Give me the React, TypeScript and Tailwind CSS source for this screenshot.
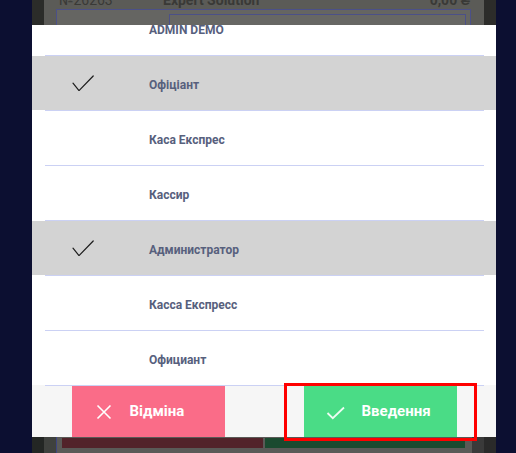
import React from "react";

type Role = { name: string; checked?: boolean };

const roles: Role[] = [
  { name: "ADMIN DEMO" },
  { name: "Офіціант", checked: true },
  { name: "Каса Експрес" },
  { name: "Кассир" },
  { name: "Администратор", checked: true },
  { name: "Касса Експресс" },
  { name: "Официант" },
];

function Check() {
  return (
    <svg width="22" height="16" viewBox="0 0 22 16" fill="none">
      <path d="M1 8.2 L7 15.6 L21.2 1" stroke="#1c1c1c" strokeWidth="1.2" strokeLinecap="round" strokeLinejoin="round" />
    </svg>
  );
}

function Divider() {
  return <div className="ml-[13px] mr-[12px] h-px bg-[#cbd1f4]" />;
}

function RoleRow({ role, last }: { role: Role; last: boolean }) {
  return (
    <div>
      <div className={`flex h-[54px] items-center ${role.checked ? "bg-[#d3d3d3]" : "bg-white"}`}>
        <div className="flex w-[117px] shrink-0 items-center pl-10">{role.checked && <Check />}</div>
        <span className="pt-[3px] text-[12px] font-bold text-[#57607d]">{role.name}</span>
      </div>
      {!last && <Divider />}
    </div>
  );
}

function BackdropTop() {
  return (
    <div className="flex h-[25px] shrink-0 overflow-hidden">
      <div className="w-3 bg-[#2b2c29]" />
      <div className="flex flex-1 flex-col bg-[#5b5b57]">
        <div className="-mt-[7px] flex h-[14px] items-center pl-[15px] pr-[14px] text-[14px] leading-[14px] text-[#393936]">
          <span className="w-[104px]">№26263</span>
          <span className="font-bold">Expert Solution</span>
          <span className="ml-auto font-bold">0,00 ₴</span>
        </div>
        <div className="ml-3 mr-[13px] mt-[2px] flex-1 border border-b-0 border-[#4b5088] bg-[#656562] pl-[112px] pr-1 pt-1">
          <div className="h-full border border-b-0 border-[#4b5088] bg-[#676764]" />
        </div>
      </div>
      <div className="w-3 bg-[#2c2c2a]" />
    </div>
  );
}

function BackdropBottom() {
  return (
    <div className="flex h-[16px] shrink-0">
      <div className="w-3 bg-[#232624]" />
      <div className="w-3 bg-[#3f413e]" />
      <div className="w-px bg-[#3d4480]" />
      <div className="flex flex-1 gap-[2px] bg-[#5a5a57] pl-[5px] pr-[7px] pt-px">
        <div className="h-[10px] w-[201px] bg-[#52232a]" />
        <div className="h-[10px] flex-1 bg-[#1b4a30]" />
      </div>
      <div className="w-3 bg-[#3a3a3a]" />
      <div className="w-3 bg-[#2a2a2a]" />
    </div>
  );
}

export default function App() {
  return (
    <div className="flex h-[453px] w-[516px] overflow-hidden bg-[#0c0f31] font-['Roboto',sans-serif]">
      <div className="w-8 shrink-0" />
      <div className="relative flex w-[464px] shrink-0 flex-col">
        <BackdropTop />

        <div className="flex flex-1 flex-col bg-white">
          <div className="h-[360px] overflow-hidden">
            <div className="-mt-[24px]">
              {roles.map((r, i) => (
                <RoleRow key={r.name} role={r} last={i === roles.length - 1} />
              ))}
            </div>
          </div>
          <div className="flex flex-1 flex-col bg-[#f6f6f6]">
            <Divider />
            <div className="grid flex-1 grid-cols-2">
              <div className="flex justify-center">
                <button className="flex w-[153px] items-center bg-[#fa6c88] pl-5 text-[15px] font-bold text-white">
                  <svg width="24" height="24" viewBox="0 0 24 24" fill="none">
                    <path d="M5.5 5.5 L18.5 18.5 M18.5 5.5 L5.5 18.5" stroke="white" strokeWidth="1.6" />
                  </svg>
                  <span className="ml-[14px]">Відміна</span>
                </button>
              </div>
              <div className="flex justify-center">
                <button className="flex w-[153px] items-center bg-[#4adc86] pl-5 text-[15px] font-bold text-white">
                  <svg width="24" height="24" viewBox="0 0 24 24" fill="none">
                    <path d="M3.5 13 L8.8 18.2 L20 7.5" stroke="#eefcf3" strokeWidth="1.8" />
                  </svg>
                  <span className="ml-[14px]">Введення</span>
                </button>
              </div>
            </div>
          </div>
        </div>

        <BackdropBottom />

        {/* highlight annotation */}
        <div className="absolute left-[252px] top-[383px] h-[58px] w-[193px] border-[3px] border-[#ff0000]" />
      </div>
    </div>
  );
}
